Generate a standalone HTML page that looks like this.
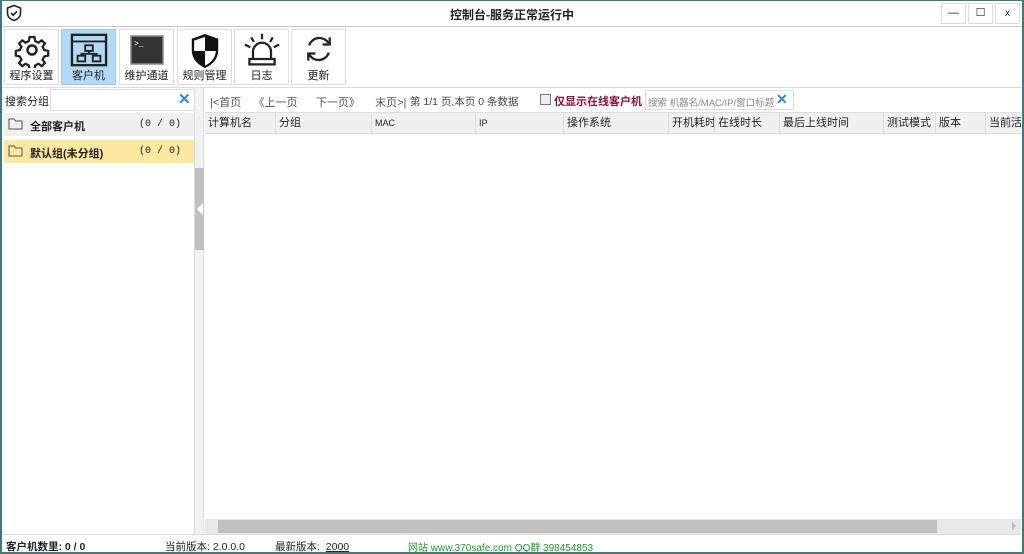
<!DOCTYPE html>
<html><head><meta charset="utf-8"><style>
*{margin:0;padding:0;box-sizing:border-box}
body{width:1024px;height:554px;overflow:hidden;background:#fff;font-family:"Liberation Sans","Noto Sans CJK SC",sans-serif;font-size:11px;color:#222;position:relative}
.a{position:absolute;white-space:nowrap}
.frame{left:0;top:0;width:1024px;height:554px;border:2px solid #3d7b7b;border-top:1px solid #3d7b7b}
.btn{position:absolute;top:29px;width:55px;height:56px;border:1px solid #ddd;background:#fff;text-align:center;font-size:11px}
.btn span{position:absolute;left:0;right:0;bottom:1px;line-height:13px}
.btn svg{position:absolute;left:50%;top:2px;transform:translateX(-50%)}
.hd{position:absolute;top:113px;height:21px;line-height:21px;font-size:11px;border-right:1px solid #ddd;padding-left:3px;color:#222;white-space:nowrap;overflow:hidden}
</style></head><body>
<svg class="a" style="left:5px;top:4px" width="18" height="18" viewBox="0 0 18 18"><path d="M9 1.5L2.5 4v5c0 4 3 6.5 6.5 7.5 3.5-1 6.5-3.5 6.5-7.5V4z" fill="none" stroke="#222" stroke-width="1.6"/><path d="M6 9l2.2 2.2L12 7.3" fill="none" stroke="#222" stroke-width="1.6"/></svg>
<div class="a" style="left:0;width:1024px;top:6px;text-align:center;font-size:12px;font-weight:bold">控制台-服务正常运行中</div>
<div class="a" style="left:941px;top:3px;width:25px;height:21px;border:1px solid #ddd;text-align:center;line-height:19px">—</div>
<div class="a" style="left:968px;top:3px;width:25px;height:21px;border:1px solid #ddd;text-align:center;line-height:19px">☐</div>
<div class="a" style="left:995px;top:3px;width:25px;height:21px;border:1px solid #ddd;text-align:center;line-height:19px;font-size:10px">x</div>
<div class="a" style="left:0;top:26px;width:1024px;height:1px;background:#ccc"></div>
<div class="btn" style="left:4px"><svg width="36" height="36" viewBox="0 0 40 40"><circle cx="20" cy="20" r="5" fill="none" stroke="#222" stroke-width="2.8"/><path d="M17 4h6l1 5 4 2 4-3 4 4-3 4 2 4 5 1v6l-5 1-2 4 3 4-4 4-4-3-4 2-1 5h-6l-1-5-4-2-4 3-4-4 3-4-2-4-5-1v-6l5-1 2-4-3-4 4-4 4 3 4-2z" fill="none" stroke="#222" stroke-width="2.8" stroke-linejoin="round" transform="translate(2 2) scale(.9)"/></svg><span>程序设置</span></div>
<div class="btn" style="left:61px;background:#b3d9f7;border-color:#9cc8ec"><svg width="38" height="36" viewBox="0 0 40 38"><rect x="2" y="3" width="36" height="32" fill="none" stroke="#222" stroke-width="2.5"/><line x1="2" y1="10" x2="38" y2="10" stroke="#222" stroke-width="2"/><rect x="16" y="14" width="8" height="6" fill="none" stroke="#222" stroke-width="2"/><rect x="8" y="25" width="8" height="6" fill="none" stroke="#222" stroke-width="2"/><rect x="24" y="25" width="8" height="6" fill="none" stroke="#222" stroke-width="2"/><path d="M20 20v3H12v2M20 23h8v2" fill="none" stroke="#222" stroke-width="2"/></svg><span>客户机</span></div>
<div class="btn" style="left:119px"><svg width="36" height="36" viewBox="0 0 36 36"><rect x="2" y="4" width="32" height="28" fill="#333" stroke="#888" stroke-width="1.5"/><text x="5" y="14" fill="#fff" font-size="8" font-family="Liberation Mono">&gt;_</text></svg><span>维护通道</span></div>
<div class="btn" style="left:177px"><svg width="34" height="38" viewBox="0 0 36 40"><path d="M18 2L4 7v12c0 10 7 16 14 19 7-3 14-9 14-19V7z" fill="#111"/><path d="M18 5v15H6.5V9z M18 20h11.5c-.5 8-6 13-11.5 15.5z" fill="#fff"/></svg><span>规则管理</span></div>
<div class="btn" style="left:234px"><svg width="40" height="36" viewBox="0 0 44 40"><path d="M12 30V22a10 10 0 0 1 20 0v8" fill="none" stroke="#222" stroke-width="2.5"/><rect x="8" y="30" width="28" height="6" fill="none" stroke="#222" stroke-width="2.5"/><path d="M22 2v6M10 6l3 5M34 6l-3 5M3 14l6 3M41 14l-6 3" stroke="#222" stroke-width="2.5"/></svg><span>日志</span></div>
<div class="btn" style="left:291px"><svg width="34" height="34" viewBox="0 0 38 38"><path d="M30 13A12 12 0 0 0 8 15M8 25a12 12 0 0 0 22-2" fill="none" stroke="#222" stroke-width="2.5"/><path d="M31 6v8h-8M7 32v-8h8" fill="none" stroke="#222" stroke-width="2.5"/></svg><span>更新</span></div>
<div class="a" style="left:2px;top:87px;width:1020px;height:1px;background:#ddd"></div>
<div class="a" style="left:5px;top:93px;font-size:11px">搜索分组:</div>
<div class="a" style="left:50px;top:89px;width:145px;height:22px;border:1px solid #ddd"></div>
<div class="a" style="left:178px;top:90px;color:#2a8ad8;font-size:15px;font-weight:bold">✕</div>
<div class="a" style="left:4px;top:113px;width:190px;height:23px;background:#f0f0f0"></div>
<div class="a" style="left:4px;top:140px;width:190px;height:23px;background:#fce8a0"></div>
<svg class="a" style="left:8px;top:118px" width="15" height="12"><path d="M1 1h5l1.5 2H14v8H1z" fill="none" stroke="#555"/></svg>
<svg class="a" style="left:8px;top:145px" width="15" height="12"><path d="M1 1h5l1.5 2H14v8H1z" fill="none" stroke="#555"/></svg>
<div class="a" style="left:30px;top:118px;font-weight:bold">全部客户机</div>
<div class="a" style="left:139px;top:119px;font-family:'Liberation Mono';font-size:10px">(0 / 0)</div>
<div class="a" style="left:30px;top:145px;font-weight:bold">默认组(未分组)</div>
<div class="a" style="left:139px;top:146px;font-family:'Liberation Mono';font-size:10px">(0 / 0)</div>
<div class="a" style="left:194px;top:88px;width:1px;height:446px;background:#ddd"></div>
<div class="a" style="left:195px;top:88px;width:9px;height:446px;background:#f2f2f2;border-right:1px solid #ddd"></div>
<div class="a" style="left:195px;top:168px;width:9px;height:82px;background:#c0c0c0"></div>
<div class="a" style="left:197px;top:203px;width:0;height:0;border-top:6px solid transparent;border-bottom:6px solid transparent;border-right:6px solid #fff"></div>
<div class="a" style="left:210px;top:94px;color:#555">|&lt;首页 &nbsp;&nbsp;&nbsp;《上一页 &nbsp;&nbsp;&nbsp;&nbsp;&nbsp;下一页》 &nbsp;&nbsp;&nbsp;&nbsp;末页&gt;|</div>
<div class="a" style="left:410px;top:94px;color:#444;font-size:10.5px">第 1/1 页,本页 0 条数据</div>
<div class="a" style="left:540px;top:94px;width:11px;height:11px;border:1px solid #777;background:#eee"></div>
<div class="a" style="left:554px;top:93px;color:#8b1040;font-weight:bold">仅显示在线客户机</div>
<div class="a" style="left:645px;top:90px;width:149px;height:20px;border:1px solid #ddd"></div>
<div class="a" style="left:648px;top:95px;color:#888;font-size:9.5px;width:126px;overflow:hidden">搜索 机器名/MAC/IP/窗口标题</div>
<div class="a" style="left:776px;top:91px;color:#2a8ad8;font-size:14px;font-weight:bold">✕</div>
<div class="a" style="left:205px;top:112px;width:816px;height:22px;background:#f0f0f0;border-top:1px solid #ddd;border-bottom:1px solid #ddd"></div>
<div class="hd" style="left:205px;width:71px">计算机名</div>
<div class="hd" style="left:276px;width:96px">分组</div>
<div class="hd" style="left:372px;width:104px;font-size:9px">MAC</div>
<div class="hd" style="left:476px;width:88px;font-size:9px">IP</div>
<div class="hd" style="left:564px;width:105px">操作系统</div>
<div class="hd" style="left:669px;width:46px">开机耗时</div>
<div class="hd" style="left:715px;width:65px">在线时长</div>
<div class="hd" style="left:780px;width:104px">最后上线时间</div>
<div class="hd" style="left:884px;width:52px">测试模式</div>
<div class="hd" style="left:936px;width:50px">版本</div>
<div class="hd" style="left:986px;width:35px;border:none">当前活</div>
<div class="a" style="left:205px;top:519px;width:816px;height:15px;background:#e8e8e8"></div>
<div class="a" style="left:218px;top:520px;width:719px;height:13px;background:#c0c0c0"></div>
<div class="a" style="left:1012px;top:522px;width:0;height:0;border-top:4px solid transparent;border-bottom:4px solid transparent;border-left:4px solid #bbb"></div>
<div class="a" style="left:2px;top:534px;width:1020px;height:1px;background:#ddd"></div>
<div class="a" style="left:6px;top:539px;font-weight:bold;font-size:10.5px">客户机数里: 0 / 0</div>
<div class="a" style="left:165px;top:539px;font-size:10.5px">当前版本: 2.0.0.0</div>
<div class="a" style="left:275px;top:539px;font-size:10.5px">最新版本: &nbsp;<u>2000</u></div>
<div class="a" style="left:408px;top:539px;color:#1c9b2c;font-size:10px">网站 www.370safe.com QQ群 398454853</div>
<div class="a frame"></div>
</body></html>
